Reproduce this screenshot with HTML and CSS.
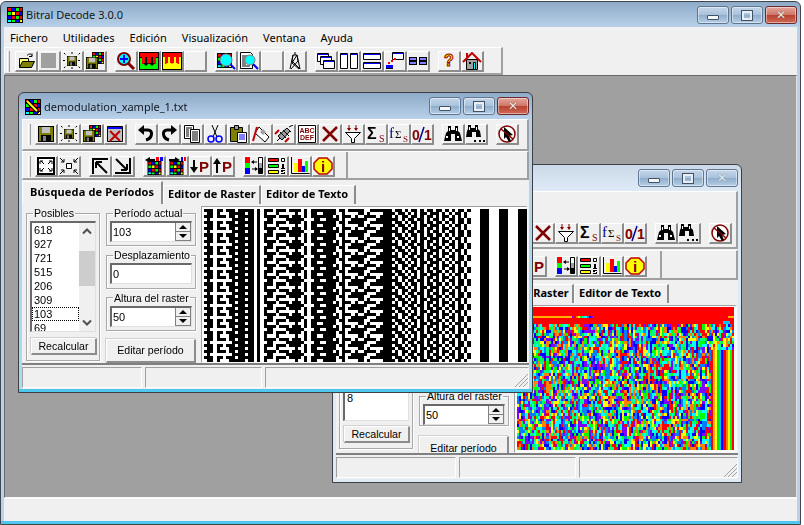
FILE: index.html
```html
<!DOCTYPE html>
<html>
<head>
  <meta charset="utf-8" />
  <title>Bitral Decode 3.0.0</title>
  <link rel="stylesheet" href="styles.css">
</head>
<body>

<svg class="sprite" height="0" width="0">
  <symbol id="grid" viewBox="0 0 16 16">
    <rect width="16" height="16" fill="#000"/>
    <path fill="#f00" d="M1 1h3v3H1zM13 1h2v3h-2zM9 5h3v3H9zM5 9h3v3H5zM13 9h2v3h-2z"/>
    <path fill="#00f" d="M5 1h3v3H5zM13 5h2v3h-2zM1 9h3v3H1zM9 13h3v2H9z"/>
    <path fill="#0f0" d="M9 1h3v3H9zM1 5h3v3H1zM5 13h3v2H5zM9 9h3v3H9z"/>
    <path fill="#ff0" d="M5 5h3v3H5zM13 13h2v2h-2z"/>
    <path fill="#0ff" d="M1 13h3v2H1z"/>
  </symbol>
  <symbol id="floppy" viewBox="0 0 16 16">
    <path fill="#000" d="M0 0h16v16H0z"/>
    <path fill="#808000" d="M1 1h14v14H1z"/>
    <path fill="#c0c0c0" d="M4 1h8v6H4z"/>
    <path fill="#000" d="M3 9h10v6H3z"/>
    <path fill="#808080" d="M5 10h3v5H5z"/>
  </symbol>
  <symbol id="i-open" viewBox="0 0 20 18">
    <path fill="#ffff80" stroke="#000" d="M3.5 6.5h9v9h-9z"/>
    <path fill="#808000" stroke="#000" d="M3.5 15.5l3-6h12l-3 6z"/>
    <path fill="none" stroke="#000" d="M11 3.5c2-2 4-2 5 0M16 1.500v3h-3"/>
  </symbol>
  <symbol id="i-gray" viewBox="0 0 20 18"><path fill="#a0a0a0" d="M2 1h15v15H2z"/></symbol>
  <symbol id="i-saveburst" viewBox="0 0 20 18">
    <use href="#floppy" x="5" y="4" width="10" height="10"/>
    <path fill="none" stroke="#000" stroke-dasharray="2 1" d="M10 0v3M10 15v3M1 8.5h3M16 8.5h3M2 1l2 2M18 1l-2 2M2 16l2-2M18 16l-2-2"/>
  </symbol>
  <symbol id="i-savemulti" viewBox="0 0 20 18">
    <use href="#grid" x="7" y="0" width="12" height="12"/>
    <use href="#floppy" x="1" y="5" width="12" height="12"/>
  </symbol>
  <symbol id="i-save" viewBox="0 0 20 18"><use href="#floppy" x="2" y="1" width="16" height="16"/></symbol>
  <symbol id="i-closegrid" viewBox="0 0 20 18">
    <path fill="#c0c0c0" stroke="#000" d="M2.5 1.5h15v15h-15z"/>
    <path fill="#00f" d="M3 2h14v2H3z"/>
    <path stroke="#c00000" stroke-width="2" d="M5 6l10 10M15 6L5 16"/>
  </symbol>
  <symbol id="i-zoomplus" viewBox="0 0 20 18">
    <path stroke="#800000" stroke-width="3" d="M12 11l6 6"/>
    <circle cx="8" cy="7" r="6" fill="#0ff" stroke="#800000" stroke-width="2"/>
    <path stroke="#00f" stroke-width="2" d="M4 7h8M8 3v8"/>
  </symbol>
  <symbol id="i-rasgreen" viewBox="0 0 20 18">
    <path fill="#0f0" d="M1 1h18v16H1z"/>
    <path fill="#f00" d="M1 1h18v4H1zM3 5h14v7H3z"/>
    <path fill="#000" d="M0 0h20v1H0zM0 17h20v1H0zM0 0h1v18H0zM19 0h1v18h-1zM1 5h2v1H1zM17 5h2v1h-2z"/>
    <path fill="#000" d="M6 5h2v6h2l-3 3-3-3h2zM12 5h2v6h2l-3 3-3-3h2z"/>
  </symbol>
  <symbol id="i-rasyellow" viewBox="0 0 20 18">
    <path fill="#ff0" d="M1 1h18v16H1z"/>
    <path fill="#f00" d="M1 1h18v4H1zM3 5h14v7H3z"/>
    <path fill="#000" d="M0 0h20v1H0zM0 17h20v1H0zM0 0h1v18H0zM19 0h1v18h-1z"/>
    <path fill="#ff0" d="M6 5h2v6h2l-3 3-3-3h2zM12 5h2v6h2l-3 3-3-3h2z"/>
  </symbol>
  <symbol id="i-zoomcolor" viewBox="0 0 20 18">
    <use href="#grid" x="1" y="0" width="15" height="17"/>
    <path stroke="#00f" stroke-width="2" d="M13 11l6 6"/>
    <circle cx="10" cy="8" r="6" fill="#0ff" stroke="#808080"/>
  </symbol>
  <symbol id="i-zoomdoc" viewBox="0 0 20 18">
    <path fill="#fff" stroke="#000" d="M1.5.5h10l2 2v14h-12z"/>
    <path stroke="#000" d="M3 4h7M3 6h4M3 8h3M3 10h3M3 12h4M3 14h8"/>
    <path stroke="#00f" stroke-width="2" d="M13 11l6 6"/>
    <circle cx="11" cy="8" r="5" fill="#0ff" stroke="#808080"/>
  </symbol>
  <symbol id="i-tower" viewBox="0 0 20 18">
    <path fill="none" stroke="#000" d="M10 0v3M8 3h4L7 11l7 6M12 3l1 6-7 8M8 3L7 9l8 8M5 17l3-14M15 17L12 3"/>
  </symbol>
  <symbol id="i-cascade" viewBox="0 0 20 18">
    <g fill="#fff" stroke="#000"><path d="M1.5 1.5h11v8h-11z"/><path d="M4.5 4.5h11v8h-11z"/><path d="M7.5 8.5h11v8h-11z"/></g>
    <path fill="#00f" d="M2 2h10v1H2zM5 5h10v1H5zM8 9h10v1H8z"/>
  </symbol>
  <symbol id="i-tilev" viewBox="0 0 20 18">
    <g fill="#fff" stroke="#000"><path d="M1.5 1.5h7v15h-7z"/><path d="M11.5 1.5h7v15h-7z"/></g>
    <path fill="#00f" d="M2 2h6v1H2zM12 2h6v1h-6z"/>
  </symbol>
  <symbol id="i-tileh" viewBox="0 0 20 18">
    <g fill="#fff" stroke="#000"><path d="M1.5 1.5h17v6h-17z"/><path d="M1.5 10.5h17v6h-17z"/></g>
    <path fill="#00f" d="M2 2h16v1H2zM2 11h16v1H2z"/>
  </symbol>
  <symbol id="i-arrange" viewBox="0 0 20 18">
    <path fill="#fff" stroke="#000" d="M7.5.5h11v7h-11z"/>
    <path fill="#00f" d="M8 1h10v1H8zM1 13h7v3H1z"/>
    <path stroke="#000" d="M1 16.500h7"/>
    <path fill="#f00" d="M3 10h2v2H3zM6 8h2v2H6zM9 6h2v2H9z"/>
  </symbol>
  <symbol id="i-mins" viewBox="0 0 20 18">
    <path fill="#000" d="M1 5h8v8H1zM11 5h8v8h-8z"/>
    <path fill="#8080ff" d="M2 6h6v2H2zM12 6h6v2h-6zM2 10h6v2H2zM12 10h6v2h-6z"/>
  </symbol>
  <symbol id="i-home" viewBox="0 0 20 18">
    <path fill="#a0a0a0" stroke="#000" d="M4.5 7.5h11v10h-11z"/>
    <path fill="none" stroke="#c00000" stroke-width="2" d="M1 10l9-9 9 9"/>
    <path fill="#c00000" d="M4 1h2v4H4z"/>
    <path fill="#000" d="M7 10h2v2H7z"/>
    <path fill="#0ff" stroke="#000" d="M11.5 10.5h2v7h-2z"/>
  </symbol>
  <symbol id="i-undo" viewBox="0 0 20 18">
    <path fill="none" stroke="#000" stroke-width="3" d="M4 5h8c5 0 5 8-2 10"/>
    <path fill="#000" d="M8 0v10L2 5z"/>
  </symbol>
  <symbol id="i-redo" viewBox="0 0 20 18">
    <path fill="none" stroke="#000" stroke-width="3" d="M16 5H8c-5 0-5 8 2 10"/>
    <path fill="#000" d="M12 0v10l6-5z"/>
  </symbol>
  <symbol id="i-copy" viewBox="0 0 20 18">
    <path fill="#fff" stroke="#000" d="M2.5.5h9v13h-9z"/>
    <path fill="#fff" stroke="#000" d="M8.5 4.5h9v13h-9z"/>
    <path stroke="#000" d="M4 3h6M4 5h3M4 7h3M4 9h3M4 11h3M10 7h6M10 9h6M10 11h6M10 13h6M10 15h6"/>
  </symbol>
  <symbol id="i-cut" viewBox="0 0 20 18">
    <path stroke="#000" fill="none" d="M7 0l5 12M13 0L8 12"/>
    <g fill="none" stroke="#00f" stroke-width="1.5"><circle cx="6" cy="14" r="3"/><circle cx="14" cy="14" r="3"/></g>
  </symbol>
  <symbol id="i-paste" viewBox="0 0 20 18">
    <path fill="#808000" stroke="#000" d="M2.5 2.5h12v14h-12z"/>
    <path fill="#a0a0a0" stroke="#000" d="M6.5.5h4v4h-4z"/>
    <path fill="#fff" stroke="#000" d="M9.5 7.5h9v10h-9z"/>
    <path stroke="#00f" d="M11 10h6M11 12h6M11 14h6"/>
  </symbol>
  <symbol id="i-eraser" viewBox="0 0 20 18">
    <path fill="#fff" stroke="#000" d="M8 2l10 10-4 5-10-9z"/>
    <path fill="#a0a0a0" d="M9 7l3 3 3-3-3-3z"/>
    <path stroke="#c00000" stroke-width="2" d="M6 2L2 16"/>
  </symbol>
  <symbol id="i-syringe" viewBox="0 0 20 18">
    <path fill="#a0a0a0" stroke="#000" d="M4 11l9-8 3 3-8 9z"/>
    <path stroke="#000" d="M15 2l4-2M13 3l4 4M3 16l3-3M6 7l6 6M9 5l6 6"/>
    <path stroke="#c00000" stroke-width="2" d="M1 9l4-4M11 17l4-4"/>
  </symbol>
  <symbol id="i-x" viewBox="0 0 20 18">
    <path stroke="#800000" stroke-width="2.5" d="M3 2l14 14M17 2L3 16"/>
  </symbol>
  <symbol id="i-funnel" viewBox="0 0 20 18">
    <path fill="#fff" stroke="#000" d="M2.5 7.5h15l-6 6v4h-3v-4z"/>
    <path stroke="#800000" d="M6 0v5M13 0v5"/>
    <path fill="#800000" d="M4 3h4l-2 3zM11 3h4l-2 3z"/>
  </symbol>
  <symbol id="i-binoc" viewBox="0 0 20 18">
    <path fill="#000" d="M5 1h3v4h4V1h3v5l2 2 2 8h-7V9H8v7H1l2-8 2-2z"/>
    <path fill="#fff" d="M6 3h1v3H6zM13 3h1v3h-1zM3 11h2v2H3zM14 11h2v2h-2z"/>
  </symbol>
  <symbol id="i-binocdots" viewBox="0 0 20 18">
    <path fill="#000" d="M2 0h3v3h4V0h3v4l2 2 1 6h-5V7H6v5H0l1-6 1-2z"/>
    <path fill="#fff" d="M3 2h1v3H3zM10 2h1v3h-1z"/>
    <path fill="#000" d="M8 15h2v2H8zM13 15h2v2h-2zM17 15h2v2h-2z"/>
  </symbol>
  <symbol id="i-nocursor" viewBox="0 0 20 18">
    <circle cx="10" cy="9" r="8" fill="#fff" stroke="#800000" stroke-width="1.5"/>
    <path fill="#000" d="M7 2l9 8-4 1 2 5-2 1-3-5-2 2z"/>
    <path stroke="#800000" stroke-width="1.5" d="M4 4l12 10"/>
  </symbol>
  <symbol id="i-fitout" viewBox="0 0 20 18">
    <path fill="#fff" stroke="#000" stroke-width="2" d="M2 1h16v16H2z"/>
    <path stroke="#000" d="M5 4l3 3M15 4l-3 3M5 14l3-3M15 14l-3-3M4 4h3M4 4v3M16 4h-3M16 4v3M4 14h3M4 14v-3M16 14h-3M16 14v-3"/>
  </symbol>
  <symbol id="i-fitin" viewBox="0 0 20 18">
    <path fill="#fff" stroke="#000" d="M7.5 6.5h5v5h-5z"/>
    <path stroke="#000" d="M1 1l4 4M19 1l-4 4M1 17l4-4M19 17l-4-4M5 5H2M5 5V2M15 5h3M15 5V2M5 13H2M5 13v3M15 13h3M15 13v3"/>
  </symbol>
  <symbol id="i-nw" viewBox="0 0 20 18">
    <path fill="none" stroke="#000" stroke-width="2" d="M3 17V2h15M6 5l11 11M6 5h6M6 5v6"/>
  </symbol>
  <symbol id="i-se" viewBox="0 0 20 18">
    <path fill="none" stroke="#000" stroke-width="2" d="M17 1v15H2M14 13L3 2M14 13H8M14 13V7"/>
  </symbol>
  <symbol id="i-gridleft" viewBox="0 0 20 18">
    <use href="#grid" x="2" y="4" width="17" height="14"/>
    <path stroke="#000" stroke-width="2" d="M4 3h7"/>
    <path fill="#000" d="M6 0v6L1 3z"/>
    <path fill="#f00" d="M12 0h3v4h-3z"/><path fill="#00f" d="M16 0h3v4h-3z"/>
  </symbol>
  <symbol id="i-gridright" viewBox="0 0 20 18">
    <use href="#grid" x="1" y="4" width="17" height="14"/>
    <path stroke="#000" stroke-width="2" d="M2 3h7"/>
    <path fill="#000" d="M8 0v6l5-3z"/>
    <path fill="#00f" d="M14 0h2v4h-2z"/><path fill="#f00" d="M17 0h2v4h-2z"/>
  </symbol>
  <symbol id="i-bands" viewBox="0 0 20 18">
    <path fill="#f00" d="M1 0h5v6H1z"/><path fill="#0f0" d="M1 6h5v5H1z"/><path fill="#00f" d="M1 11h5v6H1z"/>
    <path fill="#fff" stroke="#000" d="M14.5.5h4v16h-4z"/>
    <path fill="#a0a0a0" d="M15 6h3v5h-3z"/><path fill="#000" d="M15 11h3v6h-3z"/>
    <path stroke="#000" d="M8 5h5M8 12h5"/>
    <path fill="#000" d="M10 3v4L7 5zM11 10v4l3-2z"/>
  </symbol>
  <symbol id="i-list" viewBox="0 0 20 18">
    <path fill="#f00" stroke="#000" d="M1.5 1.5h10v3h-10z"/>
    <path fill="#0f0" stroke="#000" d="M1.5 7.5h10v3h-10z"/>
    <path fill="#ff0" stroke="#000" d="M1.5 13.5h10v3h-10z"/>
    <path fill="#fff" stroke="#000" d="M14.5 1.5h3v3h-3z"/>
    <path fill="#000" d="M15 7h2v4h1v1h-4v-1h1zM14 13h4v1h-2v1h2v2h-4v-1h3v-1h-3z"/>
  </symbol>
  <symbol id="i-bars" viewBox="0 0 20 18">
    <path stroke="#000" fill="none" d="M1.5 0v16.5h18"/>
    <path fill="#ff0" d="M4 6h4v9H4z"/><path fill="#f00" d="M8 2h4v13H8z"/><path fill="#00f" d="M12 9h3v6h-3z"/><path fill="#0f0" d="M15 4h3v11h-3z"/>
  </symbol>
  <symbol id="i-appedit" viewBox="0 0 16 16">
    <use href="#grid" width="16" height="16"/>
    <path stroke="#000" stroke-width="4" d="M2 2l10 10"/>
    <path stroke="#ff0" stroke-width="2" d="M2 2l10 10"/>
    <path fill="#000" d="M11 14l3 0 0-3z"/>
  </symbol>
</svg>

<div class="main">
  <div class="titlebar">
    <svg class="app-icon"><use href="#grid"/></svg>
    <span class="title-text">Bitral Decode 3.0.0</span>
    <div class="caption">
      <div class="cap-btn"><span class="cap-min"></span></div>
      <div class="cap-btn"><span class="cap-max"></span></div>
      <div class="cap-btn cap-close"><span class="cap-x">✕</span></div>
    </div>
  </div>

  <div class="main-body">
    <div class="menubar">
      <span>Fichero</span>
      <span>Utilidades</span>
      <span>Edición</span>
      <span>Visualización</span>
      <span>Ventana</span>
      <span>Ayuda</span>
    </div>

    <div class="toolbar toolbar-main">
      <div class="grip"></div>
      <div class="tb-group">
        <button class="tb"><svg><use href="#i-open"/></svg></button>
        <button class="tb"><svg><use href="#i-gray"/></svg></button>
        <button class="tb"><svg><use href="#i-saveburst"/></svg></button>
        <button class="tb"><svg><use href="#i-savemulti"/></svg></button>
      </div>
      <div class="tb-group">
        <button class="tb"><svg><use href="#i-zoomplus"/></svg></button>
        <button class="tb"><svg><use href="#i-rasgreen"/></svg></button>
        <button class="tb"><svg><use href="#i-rasyellow"/></svg></button>
        <button class="tb"></button>
      </div>
      <div class="tb-group">
        <button class="tb"><svg><use href="#i-zoomcolor"/></svg></button>
        <button class="tb"><svg><use href="#i-zoomdoc"/></svg></button>
        <button class="tb"></button>
        <button class="tb"><svg><use href="#i-tower"/></svg></button>
      </div>
      <div class="tb-group">
        <button class="tb"><svg><use href="#i-cascade"/></svg></button>
        <button class="tb"><svg><use href="#i-tilev"/></svg></button>
        <button class="tb"><svg><use href="#i-tileh"/></svg></button>
        <button class="tb"><svg><use href="#i-arrange"/></svg></button>
        <button class="tb"><svg><use href="#i-mins"/></svg></button>
      </div>
      <div class="tb-group">
        <button class="tb"><svg viewBox="0 0 20 18"><text x="10" y="14" class="glyph" font-size="16" fill="#ff0" stroke="#a00000" text-anchor="middle">?</text></svg></button>
        <button class="tb"><svg><use href="#i-home"/></svg></button>
      </div>
    </div>

    <div class="mdi">

      <!-- window behind -->
      <div class="win win-back">
        <div class="titlebar win-title">
          <div class="caption">
            <div class="cap-btn"><span class="cap-min"></span></div>
            <div class="cap-btn"><span class="cap-max"></span></div>
            <div class="cap-btn"><span class="cap-x cap-x-idle">✕</span></div>
          </div>
        </div>
        <div class="win-body">
          <div class="toolbar toolbar-wrap">
            <div class="tb-group">
              <button class="tb"><svg><use href="#i-x"/></svg></button>
              <button class="tb"><svg><use href="#i-funnel"/></svg></button>
              <button class="tb"><svg viewBox="0 0 20 18"><text x="1" y="14" class="glyph" font-size="16" fill="#000">Σ</text><text x="13" y="17" class="thin" font-size="10" fill="#800000">S</text></svg></button>
              <button class="tb"><svg viewBox="0 0 20 18"><text x="0" y="13" class="thin" font-size="15" fill="#000080">f</text><text x="6" y="13" class="thin" font-size="11" fill="#000">Σ</text><text x="14" y="17" class="thin" font-size="9" fill="#800000">S</text></svg></button>
              <button class="tb"><svg viewBox="0 0 20 18"><text x="0" y="15" class="glyph" font-size="14" fill="#800000">0</text><text x="12" y="15" class="glyph" font-size="14" fill="#800000">1</text><path stroke="#00008b" stroke-width="1.5" d="M7 17l5-15"/></svg></button>
            </div>
            <div class="tb-group">
              <button class="tb"><svg><use href="#i-binoc"/></svg></button>
              <button class="tb"><svg><use href="#i-binocdots"/></svg></button>
            </div>
            <div class="tb-group">
              <button class="tb"><svg><use href="#i-nocursor"/></svg></button>
            </div>
          </div>
          <div class="tb-row tb-row-back">
            <div class="band">
              <div class="tb-group">
                <button class="tb"><svg viewBox="0 0 20 18"><path stroke="#000" stroke-width="2" d="M4 5v11"/><path fill="#000" d="M0 7h8L4 1z"/><text x="9" y="15" class="glyph" font-size="15" fill="#800000">P</text></svg></button>
              </div>
              <div class="tb-group">
                <button class="tb"><svg><use href="#i-bands"/></svg></button>
                <button class="tb"><svg><use href="#i-list"/></svg></button>
                <button class="tb"><svg><use href="#i-bars"/></svg></button>
                <button class="tb"><svg viewBox="0 0 20 18"><path fill="#ff0" stroke="#c00000" stroke-width="1.5" d="M6 1h8l5 5v6l-5 5H6l-5-5V6z"/><text x="10" y="15" class="glyph" font-size="15" fill="#800000" text-anchor="middle">i</text></svg></button>
              </div>
            </div>
          </div>
          <div class="tabs tabs-back">
            <div class="tab tab-b">Editor de Raster</div>
            <div class="tab tab-c">Editor de Texto</div>
          </div>
          <div class="page page-back">
            <fieldset class="group group-list">
              <div class="listbox listbox-tail"><div class="list-items"><div>8</div></div></div>
              <button class="push push-small">Recalcular</button>
            </fieldset>
            <div class="col-fields col-fields-back">
              <fieldset class="group group-field">
                <legend>Altura del raster</legend>
                <div class="spin"><span class="spin-value">50</span><div class="spin-btns"><span class="up"></span><span class="down"></span></div></div>
              </fieldset>
              <button class="push push-large">Editar período</button>
            </div>
            <div class="raster-frame raster-frame-back"><canvas id="raster-color" width="103" height="50"></canvas></div>
          </div>
          <div class="status">
            <div class="status-cell"></div>
            <div class="status-cell"></div>
            <div class="status-cell status-last">
              <svg class="size-grip" viewBox="0 0 14 14"><path stroke="#a0a0a0" d="M14 1L1 14M14 5L5 14M14 9l-5 5"/></svg>
            </div>
          </div>
        </div>
      </div>

      <!-- active window -->
      <div class="win win-front">
        <div class="titlebar win-title">
          <svg class="app-icon"><use href="#i-appedit"/></svg>
          <span class="title-text">demodulation_xample_1.txt</span>
          <div class="caption">
            <div class="cap-btn"><span class="cap-min"></span></div>
            <div class="cap-btn"><span class="cap-max"></span></div>
            <div class="cap-btn cap-close"><span class="cap-x">✕</span></div>
          </div>
        </div>
        <div class="win-body">
          <div class="toolbar toolbar-doc">
            <div class="grip"></div>
            <div class="tb-group">
              <button class="tb"><svg><use href="#i-save"/></svg></button>
              <button class="tb"><svg><use href="#i-saveburst"/></svg></button>
              <button class="tb"><svg><use href="#i-savemulti"/></svg></button>
              <button class="tb"><svg><use href="#i-closegrid"/></svg></button>
            </div>
            <div class="tb-group">
              <button class="tb"><svg><use href="#i-undo"/></svg></button>
              <button class="tb"><svg><use href="#i-redo"/></svg></button>
              <button class="tb"><svg><use href="#i-copy"/></svg></button>
              <button class="tb"><svg><use href="#i-cut"/></svg></button>
              <button class="tb"><svg><use href="#i-paste"/></svg></button>
              <button class="tb"><svg><use href="#i-eraser"/></svg></button>
              <button class="tb"><svg><use href="#i-syringe"/></svg></button>
              <button class="tb"><svg viewBox="0 0 20 18"><path fill="#fff" stroke="#000" d="M1.5.5h17v17h-17z"/><text x="10" y="8" class="glyph" font-size="7" fill="#800000" text-anchor="middle">ABC</text><text x="10" y="15" class="glyph" font-size="7" fill="#800000" text-anchor="middle">DEF</text></svg></button>
              <button class="tb"><svg><use href="#i-x"/></svg></button>
              <button class="tb"><svg><use href="#i-funnel"/></svg></button>
              <button class="tb"><svg viewBox="0 0 20 18"><text x="1" y="14" class="glyph" font-size="16" fill="#000">Σ</text><text x="13" y="17" class="thin" font-size="10" fill="#800000">S</text></svg></button>
              <button class="tb"><svg viewBox="0 0 20 18"><text x="0" y="13" class="thin" font-size="15" fill="#000080">f</text><text x="6" y="13" class="thin" font-size="11" fill="#000">Σ</text><text x="14" y="17" class="thin" font-size="9" fill="#800000">S</text></svg></button>
              <button class="tb"><svg viewBox="0 0 20 18"><text x="0" y="15" class="glyph" font-size="14" fill="#800000">0</text><text x="12" y="15" class="glyph" font-size="14" fill="#800000">1</text><path stroke="#00008b" stroke-width="1.5" d="M7 17l5-15"/></svg></button>
            </div>
            <div class="tb-group">
              <button class="tb"><svg><use href="#i-binoc"/></svg></button>
              <button class="tb"><svg><use href="#i-binocdots"/></svg></button>
            </div>
            <div class="tb-group">
              <button class="tb"><svg><use href="#i-nocursor"/></svg></button>
            </div>
          </div>
          <div class="tb-row">
            <div class="band">
              <div class="grip"></div>
              <div class="tb-group">
                <button class="tb"><svg><use href="#i-fitout"/></svg></button>
                <button class="tb"><svg><use href="#i-fitin"/></svg></button>
              </div>
              <div class="tb-group">
                <button class="tb"><svg><use href="#i-nw"/></svg></button>
                <button class="tb"><svg><use href="#i-se"/></svg></button>
              </div>
              <div class="tb-group">
                <button class="tb"><svg><use href="#i-gridleft"/></svg></button>
                <button class="tb"><svg><use href="#i-gridright"/></svg></button>
                <button class="tb"><svg viewBox="0 0 20 18"><path stroke="#000" stroke-width="2" d="M4 3v11"/><path fill="#000" d="M0 10h8l-4 6z"/><text x="9" y="15" class="glyph" font-size="15" fill="#800000">P</text></svg></button>
                <button class="tb"><svg viewBox="0 0 20 18"><path stroke="#000" stroke-width="2" d="M4 5v11"/><path fill="#000" d="M0 7h8L4 1z"/><text x="9" y="15" class="glyph" font-size="15" fill="#800000">P</text></svg></button>
              </div>
              <div class="tb-group">
                <button class="tb"><svg><use href="#i-bands"/></svg></button>
                <button class="tb"><svg><use href="#i-list"/></svg></button>
                <button class="tb"><svg><use href="#i-bars"/></svg></button>
                <button class="tb"><svg viewBox="0 0 20 18"><path fill="#ff0" stroke="#c00000" stroke-width="1.5" d="M6 1h8l5 5v6l-5 5H6l-5-5V6z"/><text x="10" y="15" class="glyph" font-size="15" fill="#800000" text-anchor="middle">i</text></svg></button>
              </div>
            </div>
          </div>
          <div class="tabs">
            <div class="tab tab-a active">Búsqueda de Períodos</div>
            <div class="tab tab-b">Editor de Raster</div>
            <div class="tab tab-c">Editor de Texto</div>
          </div>
          <div class="page">
            <fieldset class="group group-list">
              <legend>Posibles</legend>
              <div class="listbox">
                <div class="list-items">
                  <div>618</div>
                  <div>927</div>
                  <div>721</div>
                  <div>515</div>
                  <div>206</div>
                  <div>309</div>
                  <div class="focused">103</div>
                  <div>69</div>
                </div>
                <div class="scroll">
                  <svg viewBox="0 0 16 12"><path fill="none" stroke="#505050" stroke-width="2" d="M4 8l4-4 4 4"/></svg>
                  <div class="scroll-track"><div class="scroll-thumb"></div></div>
                  <svg viewBox="0 0 16 12"><path fill="none" stroke="#505050" stroke-width="2" d="M4 4l4 4 4-4"/></svg>
                </div>
              </div>
              <button class="push push-small">Recalcular</button>
            </fieldset>
            <div class="col-fields">
              <fieldset class="group group-field">
                <legend>Período actual</legend>
                <div class="spin"><span class="spin-value">103</span><div class="spin-btns"><span class="up"></span><span class="down"></span></div></div>
              </fieldset>
              <fieldset class="group group-field">
                <legend>Desplazamiento</legend>
                <div class="spin"><span class="spin-value">0</span></div>
              </fieldset>
              <fieldset class="group group-field">
                <legend>Altura del raster</legend>
                <div class="spin"><span class="spin-value">50</span><div class="spin-btns"><span class="up"></span><span class="down"></span></div></div>
              </fieldset>
              <button class="push push-large">Editar período</button>
            </div>
            <div class="raster-frame"><canvas id="raster-bits" width="103" height="50"></canvas></div>
          </div>
          <div class="status">
            <div class="status-cell"></div>
            <div class="status-cell"></div>
            <div class="status-cell status-last">
              <svg class="size-grip" viewBox="0 0 14 14"><path stroke="#a0a0a0" d="M14 1L1 14M14 5L5 14M14 9l-5 5"/></svg>
            </div>
          </div>
        </div>
      </div>

    </div>

    <div class="main-status"></div>
  </div>
</div>

<script src="raster.js"></script>
</body>
</html>
```

FILE: styles.css
```css
body {
  margin: 1px 0 0 0;
  background: #fff;
  font-family: "Liberation Sans", Arial, sans-serif;
  font-size: 10.6px;
  color: #000;
  overflow: hidden;
}

.sprite {
  position: absolute;
}

.glyph {
  font-family: "Liberation Sans", Arial, sans-serif;
  font-weight: bold;
}

.thin {
  font-family: "Liberation Serif", serif;
}

/* outer frame */
.main {
  box-sizing: border-box;
  width: 801px;
  height: 524px;
  padding: 0 3px 3px;
  display: flex;
  flex-direction: column;
  border: 1px solid #3f4650;
  border-radius: 6px 6px 0 0;
  background: linear-gradient(#8fabc8 0, #b9d1ea 26px, #b9d1ea calc(100% - 3px), #4fc6ee calc(100% - 3px));
}

.main-body {
  flex: 1;
  display: flex;
  flex-direction: column;
  min-height: 0;
  background: #f0f0f0;
}

.titlebar {
  flex: none;
  height: 25px;
  display: flex;
  align-items: center;
  font-family: "Noto Sans", sans-serif;
  font-size: 11px;
}

.app-icon {
  width: 16px;
  height: 16px;
  margin: 1px 3px 0 3px;
}

.title-text {
  color: #101820;
}

.caption {
  display: flex;
  gap: 2px;
  margin-left: auto;
  align-self: flex-start;
  margin-top: 4px;
}

.cap-btn {
  box-sizing: border-box;
  width: 32px;
  height: 18px;
  display: flex;
  align-items: center;
  justify-content: center;
  border: 1px solid #5f7690;
  border-radius: 3px;
  background: linear-gradient(#c5d6e8 0, #a9c2dc 48%, #8eacca 50%, #b7cee6 100%);
  box-shadow: inset 0 0 0 1px rgba(255, 255, 255, 0.45);
}

.cap-close {
  border-color: #6a2a2a;
  background: linear-gradient(#e3a79b 0, #cf7768 48%, #b8402e 50%, #cf6a58 100%);
}

.cap-min {
  width: 10px;
  height: 3px;
  margin-top: 4px;
  background: #f4f6f8;
  border: 1px solid #3f5268;
  border-radius: 1px;
}

.cap-max {
  box-sizing: border-box;
  width: 12px;
  height: 11px;
  border: 3px solid #e8eef4;
  outline: 1px solid #3f5268;
  outline-offset: -1px;
}

.cap-x {
  font-family: "DejaVu Sans", sans-serif;
  font-size: 12px;
  font-weight: bold;
  line-height: 12px;
  color: #f0f0f0;
  text-shadow: 0 0 1px #402020;
}

.cap-x-idle {
  color: #e8eef4;
  text-shadow: 0 0 1px #506070;
}

.menubar {
  flex: none;
  height: 20px;
  display: flex;
  align-items: center;
  gap: 15px;
  padding-left: 6px;
  font-family: "Noto Sans", sans-serif;
  font-size: 11px;
}

/* toolbars */
.toolbar,
.tb-row {
  flex: none;
  display: flex;
  box-sizing: border-box;
  border-top: 1px solid #fff;
  border-left: 1px solid #fff;
  border-right: 2px solid #a0a0a0;
  border-bottom: 2px solid #a0a0a0;
}

.toolbar-main {
  width: 499px;
  height: 28px;
  padding: 3px 0 0 2px;
}

.toolbar-main .grip {
  margin-right: 5px;
}

.toolbar-doc {
  height: 32px;
  padding: 4px 0 0 5px;
}

.toolbar-wrap {
  height: 58px;
  padding: 31px 0 0 195px;
}

.tb-row {
  height: 29px;
}

.tb-row-back {
  height: 30px;
  margin-top: 1px;
}

.band {
  box-sizing: border-box;
  width: 325px;
  display: flex;
  padding: 4px 0 0 5px;
  border-right: 2px solid #a0a0a0;
}

.tb-row-back .band {
  padding: 5px 0 0 187px;
}

.grip {
  flex: none;
  box-sizing: border-box;
  width: 3px;
  height: 21px;
  margin-right: 4px;
  border-left: 1px solid #fff;
  border-right: 1px solid #a0a0a0;
  background: #e4e4e4;
}

.tb-group {
  display: flex;
  margin-right: 8px;
}

.tb {
  flex: none;
  box-sizing: border-box;
  width: 23px;
  height: 21px;
  padding: 0;
  display: flex;
  align-items: center;
  justify-content: center;
  border: 0;
  border-top: 1px solid #fff;
  border-left: 1px solid #fff;
  border-right: 2px solid #8c8c8c;
  border-bottom: 2px solid #8c8c8c;
  background: #f0f0f0;
}

.tb svg {
  width: 20px;
  height: 18px;
  flex: none;
}

/* mdi area */
.mdi {
  flex: 1;
  position: relative;
  overflow: hidden;
  min-height: 0;
  background: #a0a0a0;
  border-top: 1px solid #696969;
  border-left: 1px solid #696969;
  border-right: 1px solid #e0e0e0;
  border-bottom: 1px solid #f8f8f8;
}

.main-status {
  flex: none;
  height: 22px;
  border-top: 1px solid #fff;
}

.win {
  position: absolute;
  box-sizing: border-box;
  padding: 0 3px 3px;
  display: flex;
  flex-direction: column;
  border: 1px solid #3c3f44;
  border-radius: 6px 6px 0 0;
}

.win-front {
  left: 13px;
  top: 16px;
  width: 515px;
  height: 301px;
  background: linear-gradient(#8fabc8 0, #b9d1ea 26px, #a8dcf0 calc(100% - 3px), #4fc6ee calc(100% - 3px));
}

.win-back {
  left: 327px;
  top: 88px;
  width: 410px;
  height: 319px;
  background: linear-gradient(#cbd9e8 0, #deeaf6 26px);
}

.win-title {
  height: 26px;
  margin: 0;
}

.win-body {
  flex: 1;
  display: flex;
  flex-direction: column;
  min-height: 0;
  background: #f0f0f0;
}

/* tabs */
.tabs {
  flex: none;
  height: 24px;
  display: flex;
  align-items: flex-end;
}

.tabs-back {
  padding-left: 140px;
  height: 23px;
}

.tab {
  box-sizing: border-box;
  height: 19px;
  line-height: 16px;
  padding-left: 4px;
  font-family: "Noto Sans", sans-serif;
  font-size: 11px;
  font-weight: bold;
  border-top: 1px solid #fff;
  border-left: 1px solid #fff;
  border-right: 2px solid #8c8c8c;
}

.tab.active {
  height: 23px;
  line-height: 20px;
  padding-left: 7px;
  letter-spacing: 0.15px;
}

.tab-a { width: 141px; }
.tab-b { width: 98px; }
.tab-c { width: 95px; }

/* tab page */
.page {
  flex: 1;
  min-height: 0;
  overflow: hidden;
  display: flex;
  padding: 2px 0 0 4px;
}

.page-back {
  padding-left: 3px;
}

.group {
  box-sizing: border-box;
  margin: 0;
  padding: 0 3px 4px;
  min-width: 0;
  display: flex;
  flex-direction: column;
  border: 1px solid #a8a8a8;
  box-shadow: 1px 1px 0 #fff, inset 1px 1px 0 #fff;
}

.group legend {
  padding: 0 1px;
  margin-left: 3px;
  line-height: 14px;
  white-space: nowrap;
}

.group-list {
  flex: none;
  width: 74px;
  height: 155px;
}

.page-back .group-list {
  height: 144px;
}

.listbox {
  flex: 1;
  display: flex;
  min-height: 0;
  overflow: hidden;
  background: #fff;
  border-top: 2px solid #696969;
  border-left: 2px solid #696969;
  border-right: 1px solid #e0e0e0;
  border-bottom: 1px solid #e0e0e0;
  margin-top: 1px;
}

.listbox-tail {
  padding-top: 82px;
}

.list-items {
  flex: 1;
  min-width: 0;
}

.list-items div {
  height: 14px;
  line-height: 14px;
  padding-left: 2px;
  font-size: 11px;
}

.list-items .focused {
  outline: 1px dotted #000;
  outline-offset: -1px;
}

.scroll {
  flex: none;
  width: 16px;
  display: flex;
  flex-direction: column;
  background: #f0f0f0;
}

.scroll svg {
  flex: none;
  width: 16px;
  height: 17px;
}

.scroll-track {
  flex: 1;
  padding-top: 11px;
}

.scroll-thumb {
  height: 35px;
  background: #cdcdcd;
}

.push {
  flex: none;
  box-sizing: border-box;
  padding: 0;
  font-family: "Liberation Sans", Arial, sans-serif;
  font-size: 10.6px;
  color: #000;
  background: #f0f0f0;
  border: 0;
  border-top: 1px solid #fff;
  border-left: 1px solid #fff;
  border-right: 2px solid #8c8c8c;
  border-bottom: 2px solid #8c8c8c;
  box-shadow: -1px -1px 0 #d0d0d0;
}

.push-small {
  height: 17px;
  width: 66px;
  margin: 6px 0 1px 1px;
}

.page-back .push-small {
  margin-top: 5px;
}

.push-large {
  height: 24px;
  width: 90px;
  margin-top: 6px;
}

.col-fields-back .push-large {
  margin-top: 8px;
}

.col-fields {
  flex: none;
  width: 90px;
  margin-left: 6px;
  display: flex;
  flex-direction: column;
  gap: 2px;
}

.col-fields-back {
  padding-top: 84px;
}

.group-field {
  height: 41px;
  padding: 0 3px;
}

.spin {
  height: 21px;
  margin-top: 1px;
  box-sizing: border-box;
  display: flex;
  align-items: center;
  justify-content: space-between;
  background: #fff;
  border-top: 2px solid #696969;
  border-left: 2px solid #696969;
  border-right: 1px solid #e0e0e0;
  border-bottom: 1px solid #e0e0e0;
}

.spin-value {
  padding-left: 1px;
  font-size: 11px;
}

.spin-btns {
  flex: none;
  width: 15px;
  height: 18px;
  display: flex;
  flex-direction: column;
  border-left: 1px solid #808080;
}

.spin-btns span {
  flex: 1;
  display: flex;
  align-items: center;
  justify-content: center;
  background: #f0f0f0;
  border-right: 1px solid #808080;
  border-bottom: 1px solid #808080;
}

.spin-btns .up::before {
  content: "";
  border: 4px solid transparent;
  border-top: 0;
  border-bottom: 4px solid #000;
}

.spin-btns .down::before {
  content: "";
  border: 4px solid transparent;
  border-bottom: 0;
  border-top: 4px solid #000;
}

.raster-frame {
  flex: none;
  margin: 0 0 0 5px;
  width: 327px;
  height: 157px;
  box-sizing: border-box;
  padding: 2px;
  background: #fff;
  border-top: 1px solid #a0a0a0;
  border-left: 1px solid #a0a0a0;
  border-right: 2px solid #f8f8f8;
  border-bottom: 1px solid #f8f8f8;
}

.raster-frame canvas {
  display: block;
  width: 323px;
  height: 153px;
  image-rendering: pixelated;
}

.raster-frame-back {
  width: 223px;
  height: 148px;
  margin-left: 5px;
  padding: 1px 2px;
}

.raster-frame-back canvas {
  width: 217px;
  height: 143px;
}

/* status bars */
.status {
  flex: none;
  box-sizing: border-box;
  height: 26px;
  display: flex;
  gap: 3px;
  padding-top: 2px;
  border-top: 2px solid #808080;
}

.status-cell {
  box-sizing: border-box;
  flex: none;
  height: 21px;
  width: 120px;
  border-top: 1px solid #a0a0a0;
  border-left: 1px solid #a0a0a0;
  border-right: 1px solid #fff;
  border-bottom: 1px solid #fff;
}

.status-cell + .status-cell {
  width: 117px;
}

.status-cell.status-last {
  flex: 1;
  width: auto;
  position: relative;
}

.size-grip {
  position: absolute;
  right: 0;
  bottom: 0;
  width: 14px;
  height: 14px;
}
```

FILE: raster.js
```js
// 4-row repeat of the bit pattern, one entry per column band
var bands = [
  ["#", ".", "#", "."],
  ["##", "##", "##", "#."],
  [".", ".", ".", "."],
  ["##.###.##", "#...#####", "###.##.##", ".....####"],
  ["#", ".", "#", "."],
  ["##", "##", "##", "##"],
  [".", ".", ".", "."],
  ["#", "#", "#", "#"],
  [".", ".", ".", "."],
  ["##", "#.", "##", ".#"],
  ["#.###.###", "..#.....#", "##.###.##", "#....####"],
  ["#.#", "..#", "#.#", "##."],
  [".", ".", ".", "."],
  ["#######", "##..###", "#######", ".##..##"],
  ["#.##.#####..#####", "#..#....##.#....#", ".#.###.#..####.##", "##.#..#####...###"],
  ["##", "##", "##", "##"],
  [".##.#.##.#.##.##.#.#.##.#", "#.##.#.#.##.###.#.#.##.#.", ".#.##.##.#.##.#.##.#.#.#.", "##.#.##.##.#.##.#.##.##.#"],
  ["...", "...", "...", "..."],
  ["###", "###", "###", "###"],
  ["...", "...", "...", "..."],
  ["###", "###", "###", "###"],
  ["...", "...", "...", "..."],
  ["###", "###", "###", "###"]
];

function drawBits() {
  var ctx = document.getElementById("raster-bits").getContext("2d");
  ctx.fillStyle = "#fff";
  ctx.fillRect(0, 0, 103, 50);
  ctx.fillStyle = "#000";
  for (var y = 0; y < 50; y++) {
    var x = 0;
    for (var b = 0; b < bands.length; b++) {
      var row = bands[b][y % 4];
      for (var i = 0; i < row.length; i++) {
        if (row[i] == "#") ctx.fillRect(x, y, 1, 1);
        x++;
      }
    }
  }
}

function drawColor() {
  var colors = ["#ff0000", "#ff8000", "#ffff00", "#00ff00", "#00ff80", "#00ffff", "#0080ff", "#0000ff", "#8000ff"];
  var stripes = ["#ff0000", "#ffb000", "#ffff00", "#00e000", "#00c0ff", "#0000ff", "#ff0000", "#ff8000", "#ffff00", "#00ff00", "#ff0000"];
  var ctx = document.getElementById("raster-color").getContext("2d");
  var seed = 12345;
  function rnd() {
    seed = (seed * 25173 + 13849) % 65536;
    return seed / 65536;
  }
  var prev = [];
  for (var y = 0; y < 50; y++) {
    for (var x = 0; x < 103; x++) {
      var c;
      if (y < 6) {
        c = "#ff0000";
      } else if (y >= 15 && x >= 92) {
        c = stripes[x - 92];
      } else if (prev[x] && rnd() < 0.2) {
        c = prev[x];
      } else {
        c = colors[Math.floor(rnd() * colors.length)];
      }
      prev[x] = c;
      ctx.fillStyle = c;
      ctx.fillRect(x, y, 1, 1);
    }
  }
  // the partly filled lines at the top
  ctx.fillStyle = "#ffb000";
  ctx.fillRect(0, 3, 26, 1);
  for (var i = 26; i < 36; i++) {
    ctx.fillStyle = colors[i % 9];
    ctx.fillRect(i, 3, 1, 1);
  }
  ctx.fillStyle = "#ffb000";
  ctx.fillRect(100, 3, 3, 1);
  ctx.fillStyle = "#00c0ff";
  ctx.fillRect(98, 5, 3, 1);
}

drawBits();
drawColor();
```
